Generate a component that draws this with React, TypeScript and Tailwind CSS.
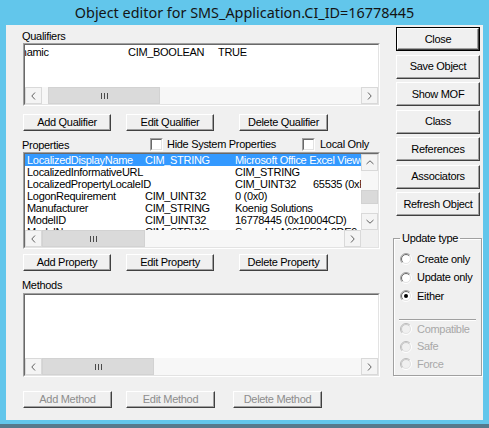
import React from 'react';

type Dir = 'l' | 'r' | 'u' | 'd';

const Chevron = ({ dir }: { dir: Dir }) => {
  const horiz = dir === 'l' || dir === 'r';
  const pts = {
    l: '4,0.5 0.8,4 4,7.5',
    r: '1,0.5 4.2,4 1,7.5',
    u: '0.5,4 4,0.8 7.5,4',
    d: '0.5,1 4,4.2 7.5,1',
  }[dir];
  return (
    <svg width={horiz ? 5 : 8} height={horiz ? 8 : 5} viewBox={horiz ? '0 0 5 8' : '0 0 8 5'}>
      <polyline points={pts} fill="none" stroke="#606060" strokeWidth="1" />
    </svg>
  );
};

const Grip = () => (
  <svg width="7" height="6" viewBox="0 0 7 6">
    <path d="M0.5 0v6M3.5 0v6M6.5 0v6" stroke="#4a4a4a" strokeWidth="1" />
  </svg>
);

const ArrowBox = ({ dir, className = 'w-[17px] h-full' }: { dir: Dir; className?: string }) => (
  <div className={`${className} shrink-0 flex items-center justify-center bg-[#f4f4f4] border border-[#d9d9d9]`}>
    <Chevron dir={dir} />
  </div>
);

const HScroll = ({ thumb }: { thumb: string }) => (
  <div className="flex flex-1 h-[17px] bg-[#f7f7f7]">
    <ArrowBox dir="l" />
    <div className="flex flex-1">
      <div className={`${thumb} h-full bg-[#dadada] border border-[#d2d2d2] flex items-center justify-center`}>
        <Grip />
      </div>
    </div>
    <ArrowBox dir="r" />
  </div>
);

const VScroll = () => (
  <div className="w-[17px] h-full flex flex-col bg-[#f7f7f7] shrink-0">
    <ArrowBox dir="u" className="h-[17px] w-full" />
    <div className="flex-1 flex flex-col">
      <div className="mt-[19px] h-[14px] bg-[#dadada] border border-[#d2d2d2]" />
    </div>
    <ArrowBox dir="d" className="h-[17px] w-full" />
  </div>
);

const Sunken = ({ className, children }: { className: string; children?: React.ReactNode }) => (
  <div className={`${className} border border-t-[#a0a0a0] border-l-[#a0a0a0] border-r-white border-b-white`}>
    <div className="h-full border border-t-[#696969] border-l-[#696969] border-r-[#e3e3e3] border-b-[#e3e3e3] bg-white flex flex-col overflow-hidden">
      {children}
    </div>
  </div>
);

const Btn = ({ label, className = '', disabled }: { label: string; className?: string; disabled?: boolean }) => (
  <div
    className={`${className} shrink-0 flex items-center justify-center whitespace-nowrap bg-[#f0f0f0] border border-t-white border-l-white border-r-[#404040] border-b-[#404040] shadow-[inset_-1px_-1px_0_#a0a0a0] ${
      disabled ? 'text-[#8d8d8d]' : 'text-black'
    }`}
  >
    {label}
  </div>
);

const Check = () => (
  <span className="w-[13px] h-[13px] shrink-0 border border-t-[#a0a0a0] border-l-[#a0a0a0] border-r-white border-b-white">
    <span className="block w-full h-full bg-white border border-t-[#696969] border-l-[#696969] border-r-[#e3e3e3] border-b-[#e3e3e3]" />
  </span>
);

const arc = (r: number) => {
  const d = r * 0.7071;
  return { a: `M${6 - d} ${6 + d}A${r} ${r} 0 0 1 ${6 + d} ${6 - d}`, b: `M${6 + d} ${6 - d}A${r} ${r} 0 0 1 ${6 - d} ${6 + d}` };
};

const Radio = ({ checked, disabled }: { checked?: boolean; disabled?: boolean }) => {
  const o = arc(5.5);
  const i = arc(4.5);
  return (
    <svg width="12" height="12" viewBox="0 0 12 12" className="shrink-0">
      <circle cx="6" cy="6" r="4.5" fill={disabled ? '#f0f0f0' : '#fff'} />
      <path d={o.a} fill="none" stroke={disabled ? '#b8b8b8' : '#a0a0a0'} />
      <path d={o.b} fill="none" stroke="#fff" />
      <path d={i.a} fill="none" stroke={disabled ? '#c8c8c8' : '#696969'} />
      <path d={i.b} fill="none" stroke="#e3e3e3" />
      {checked && <circle cx="6" cy="6" r="2" fill="#000" />}
    </svg>
  );
};

const RadioRow = ({ label, checked, disabled, className }: { label: string; checked?: boolean; disabled?: boolean; className: string }) => (
  <div className={`${className} flex items-center gap-[5px] whitespace-nowrap ${disabled ? 'text-[#a8a8a8]' : 'text-black'}`}>
    <Radio checked={checked} disabled={disabled} />
    <span>{label}</span>
  </div>
);

const props = [
  { c: ['LocalizedDisplayName', 'CIM_STRING', 'Microsoft Office Excel Viewer', ''], sel: true },
  { c: ['LocalizedInformativeURL', '', 'CIM_STRING', ''] },
  { c: ['LocalizedPropertyLocaleID', '', 'CIM_UINT32', '65535 (0xFFFF)'] },
  { c: ['LogonRequirement', 'CIM_UINT32', '0 (0x0)', ''] },
  { c: ['Manufacturer', 'CIM_STRING', 'Koenig Solutions', ''] },
  { c: ['ModelID', 'CIM_UINT32', '16778445 (0x10004CD)', ''] },
  { c: ['ModelName', 'CIM_STRING', 'ScopeId_A6955F04-2DE9-4C74-9A2F', ''] },
];

const colW = ['w-[118px]', 'w-[90px]', 'w-[78px]', 'w-[80px]'];

const rightButtons = ['Save Object', 'Show MOF', 'Class', 'References', 'Associators', 'Refresh Object'];

export default function App() {
  return (
    <div className="w-[489px] h-[428px] bg-[#62c6eb] flex flex-col overflow-hidden font-['Liberation_Sans',Arial,sans-serif] text-[11px] leading-[13px] tracking-[-0.3px] text-black">
      {/* Title bar */}
      <div className="h-[25px] shrink-0 flex items-center justify-center font-['Noto_Sans',sans-serif] text-[14.4px] tracking-normal text-[#141414]">
        Object editor for SMS_Application.CI_ID=16778445
      </div>

      {/* Client area */}
      <div className="mx-[6px] h-[395px] shrink-0 bg-[#f0f0f0] flex">
        {/* Left column */}
        <div className="ml-[17px] w-[357px] flex flex-col">
          <div className="mt-[4px] h-[14px] leading-[14px] ml-[-1px]">Qualifiers</div>
          <Sunken className="h-[63px]">
            <div className="flex-1 overflow-hidden pt-[1px]">
              <div className="flex h-[12px] leading-[12px] whitespace-nowrap ml-[-17px]">
                <span className="w-[120px] shrink-0">Dynamic</span>
                <span className="w-[90px] shrink-0">CIM_BOOLEAN</span>
                <span>TRUE</span>
              </div>
            </div>
            <div className="flex">
              <HScroll thumb="ml-[6px] w-[112px]" />
            </div>
          </Sunken>

          <div className="mt-[8px] flex">
            <Btn label="Add Qualifier" className="w-[88px] h-[17px]" />
            <Btn label="Edit Qualifier" className="ml-[15px] w-[88px] h-[17px]" />
            <Btn label="Delete Qualifier" className="ml-[25px] w-[89px] h-[17px]" />
          </div>

          <div className="mt-[6px] h-[14px] flex items-center whitespace-nowrap">
            <span className="w-[128px] shrink-0 ml-[-1px] pt-[2px]">Properties</span>
            <span className="w-[152px] shrink-0 flex items-center">
              <Check />
              <span className="ml-[4px]">Hide System Properties</span>
            </span>
            <Check />
            <span className="ml-[5px]">Local Only</span>
          </div>

          <Sunken className="mt-[1px] h-[97px]">
            <div className="h-[76px] flex">
              <div className="flex-1 overflow-hidden">
                {props.map((r) => (
                  <div
                    key={r.c[0]}
                    className={`flex h-[12px] leading-[12px] pl-[2px] whitespace-nowrap ${r.sel ? 'bg-[#3399ff] text-white' : ''}`}
                  >
                    {r.c.map((t, i) => (
                      <span key={i} className={`${colW[i]} shrink-0`}>
                        {t}
                      </span>
                    ))}
                  </div>
                ))}
              </div>
              <VScroll />
            </div>
            <div className="flex">
              <HScroll thumb="w-[103px]" />
              <div className="w-[17px] h-[17px] bg-[#f0f0f0]" />
            </div>
          </Sunken>

          <div className="mt-[5px] flex">
            <Btn label="Add Property" className="w-[88px] h-[17px]" />
            <Btn label="Edit Property" className="ml-[15px] w-[88px] h-[17px]" />
            <Btn label="Delete Property" className="ml-[25px] w-[89px] h-[17px]" />
          </div>

          <div className="mt-[7px] h-[14px] leading-[14px] ml-[-1px]">Methods</div>
          <Sunken className="mt-[1px] h-[84px]">
            <div className="flex-1" />
            <div className="flex">
              <HScroll thumb="w-[112px]" />
            </div>
          </Sunken>

          <div className="mt-[14px] flex">
            <Btn label="Add Method" className="w-[89px] h-[17px]" disabled />
            <Btn label="Edit Method" className="ml-[14px] w-[89px] h-[17px]" disabled />
            <Btn label="Delete Method" className="ml-[18px] w-[89px] h-[17px]" disabled />
          </div>
        </div>

        {/* Right column */}
        <div className="ml-[13px] w-[89px] flex flex-col">
          <div className="mt-[2px] ml-[3px] w-[84px] flex flex-col gap-[3.5px]">
            <div className="h-[24px] border border-black flex">
              <Btn label="Close" className="flex-1 h-full" />
            </div>
            {rightButtons.map((b) => (
              <Btn key={b} label={b} className="h-[24px] w-full" />
            ))}
          </div>

          <fieldset className="mt-[16px] border border-[#a0a0a0] shadow-[inset_1px_1px_0_#fff,1px_1px_0_#fff] px-[6px] pb-[2px]">
            <legend className="px-[2px] leading-[13px]">Update type</legend>
            <RadioRow label="Create only" className="mt-[5px] h-[18.5px]" />
            <RadioRow label="Update only" className="h-[18.5px]" />
            <RadioRow label="Either" checked className="h-[18.5px]" />
            <div className="mt-[13px] mx-[-1px] border-t border-t-[#a0a0a0] border-b border-b-white" />
            <RadioRow label="Compatible" disabled className="h-[17.5px]" />
            <RadioRow label="Safe" disabled className="h-[17.5px]" />
            <RadioRow label="Force" disabled className="h-[17.5px]" />
          </fieldset>
        </div>
      </div>

      <div className="h-[4px] shrink-0" />
      <div className="h-[4px] shrink-0 bg-[#557a8d]" />
    </div>
  );
}
